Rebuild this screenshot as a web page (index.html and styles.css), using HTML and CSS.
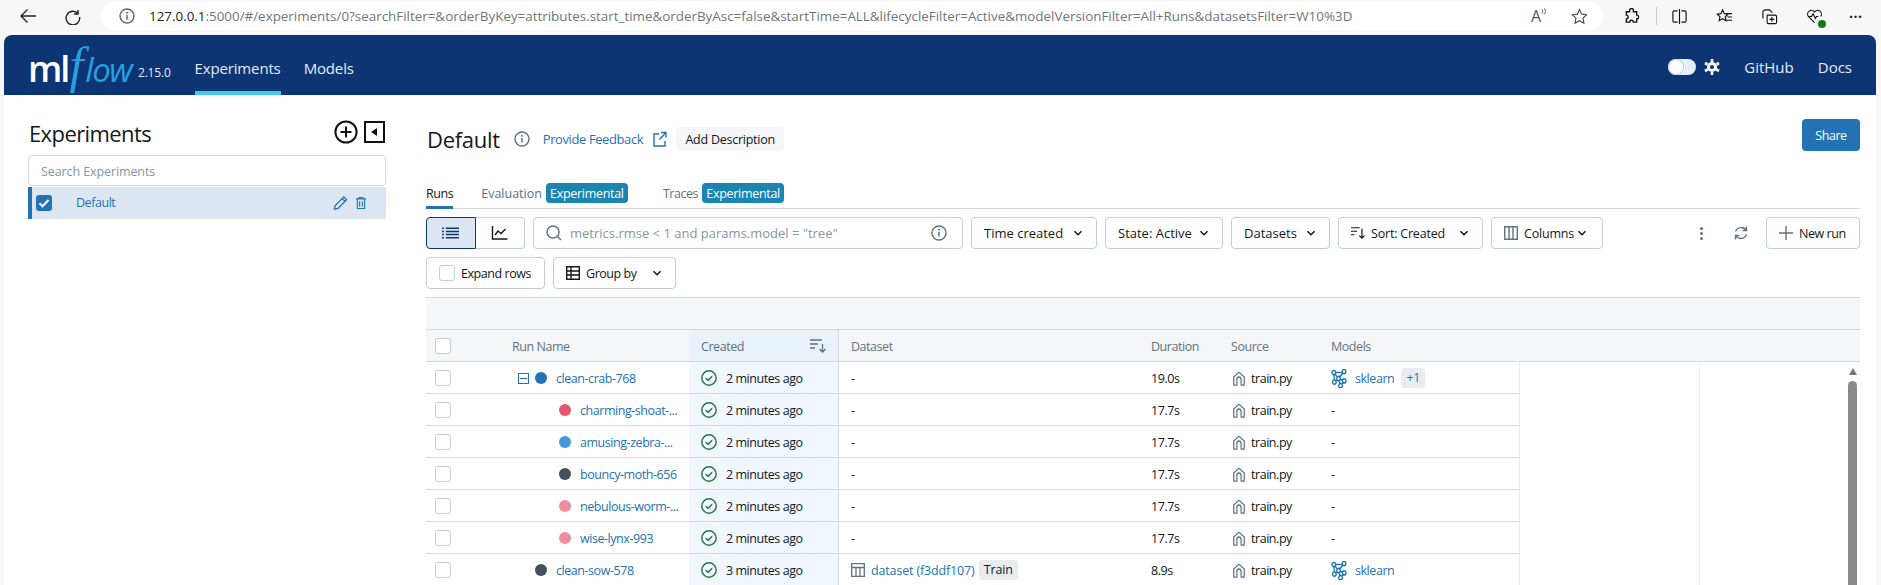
FILE: index.html
```html
<!DOCTYPE html>
<html lang="en">
<head>
    <meta charset="UTF-8">
    <title>MLflow Experiments</title>
    <link rel="stylesheet" href="styles.css">
</head>
<body>
    <svg class="defs" width="0" height="0">
        <symbol id="i-check" viewBox="0 0 16 16"><circle cx="8" cy="8" r="7.2" fill="none" stroke="#277c43" stroke-width="1.5"/><path d="M4.9 8.2l2.2 2.2 4-4.2" fill="none" stroke="#277c43" stroke-width="1.5"/></symbol>
        <symbol id="i-source" viewBox="0 0 16 16" preserveAspectRatio="none"><path d="M2 15V6.5L8 1.2l6 5.3V15h-3.6V8.8a2.4 2.4 0 0 0-4.8 0V15z" fill="none" stroke="#5f7281" stroke-width="1.4" stroke-linejoin="round"/></symbol>
        <symbol id="i-model" viewBox="0 0 16 16" preserveAspectRatio="none"><g fill="none" stroke="#2272b4" stroke-width="1.3"><circle cx="2.8" cy="3" r="1.8"/><circle cx="13" cy="2.2" r="1.8"/><circle cx="7.6" cy="8" r="1.8"/><circle cx="3.4" cy="11" r="1.8"/><circle cx="13.2" cy="10" r="1.8"/><circle cx="9.5" cy="14" r="1.8"/><path d="M4.4 3h6.8M4 4.4l2.4 2.4M11.8 3.6L8.8 6.6M5.8 9L4.9 10M9.4 8.5l2 1M8 9.8l1 2.4M12.2 11.5l-1.4 1.2M3 4.8L3.3 9.2"/></g></symbol>
        <symbol id="i-info" viewBox="0 0 16 16"><circle cx="8" cy="8" r="7" fill="none" stroke="currentColor" stroke-width="1.4"/><path d="M8 7v4.6" stroke="currentColor" stroke-width="1.5"/><circle cx="8" cy="4.8" r="1" fill="currentColor"/></symbol>
        <symbol id="i-chev" viewBox="0 0 12 12"><path d="M2.5 4.2L6 7.7l3.5-3.5" fill="none" stroke="#11171c" stroke-width="1.5"/></symbol>
    </svg>

    <div class="browser-bar">
        <svg class="nav-icon back" viewBox="0 0 18 18"><path d="M17 9H2M8.500 2.500L2 9l6.500 6.500" fill="none" stroke="#222" stroke-width="1.4"/></svg>
        <svg class="nav-icon reload" viewBox="0 0 18 18"><path d="M14 3v4h-4M14 6.600A6.800 6.800 0 1 0 15.600 10" fill="none" stroke="#222" stroke-width="1.4"/></svg>
        <div class="address">
            <svg class="addr-info"><use href="#i-info"/></svg>
            <span class="url"><b>127.0.0.1</b>:5000/#/experiments/0?searchFilter=&amp;orderByKey=attributes.start_time&amp;orderByAsc=false&amp;startTime=ALL&amp;lifecycleFilter=Active&amp;modelVersionFilter=All+Runs&amp;datasetsFilter=W10%3D</span>
            <span class="read-aloud">A</span>
            <svg class="waves" viewBox="0 0 6 8"><path d="M1 1.500a3 3 0 0 1 0 4M3.500.5a5 5 0 0 1 0 6" fill="none" stroke="#555" stroke-width=".9"/></svg>
            <svg class="addr-star" viewBox="0 0 18 18"><path d="M9 1.600l2.300 4.900 5.200.7-3.800 3.600 1 5.300L9 13.500l-4.700 2.600 1-5.300L1.500 7.200l5.200-.7z" fill="none" stroke="#444" stroke-width="1.2"/></svg>
        </div>
        <div class="browser-tools">
            <svg viewBox="0 0 18 18"><path d="M7 2.500a2 2 0 0 1 4 0V4h3.500v3.500a2 2 0 0 1 0 4V15H11a2 2 0 0 0-4 0H3.500v-3.500a2 2 0 0 0 0-4V4H7z" fill="none" stroke="#111" stroke-width="1.4"/></svg>
            <i class="tool-sep"></i>
            <svg viewBox="0 0 18 18"><path d="M9 1v16M7 3H3.500A1.500 1.500 0 0 0 2 4.500v9A1.500 1.500 0 0 0 3.500 15H7M11 3h3.500A1.500 1.500 0 0 1 16 4.500v9a1.500 1.500 0 0 1-1.500 1.500H11" fill="none" stroke="#111" stroke-width="1.2"/></svg>
            <svg viewBox="0 0 18 18"><path d="M7 2l1.800 4 4 .5-3 2.800.8 4.200L7 11.400l-3.600 2.100.8-4.200-3-2.800 4-.5zM11 6h6M12 9.500h5M11 13h6" fill="none" stroke="#111" stroke-width="1.2"/></svg>
            <svg viewBox="0 0 18 18"><path d="M2 11V4.500A2.500 2.500 0 0 1 4.500 2H9l3 3M7 7.500h8a1.500 1.500 0 0 1 1.500 1.500v6a1.500 1.500 0 0 1-1.500 1.500H8A1.500 1.500 0 0 1 6.500 15V8zM11.500 9.500v5M9 12h5" fill="none" stroke="#111" stroke-width="1.2"/></svg>
            <span class="health">
                <svg viewBox="0 0 18 18"><path d="M9 15.500L2.500 9A4 4 0 0 1 9 4.200 4 4 0 0 1 15.500 9M3.500 9H6l1.500-3 2.500 5 1-2h2" fill="none" stroke="#111" stroke-width="1.2"/></svg>
                <i class="health-ok"></i>
            </span>
            <span class="tool-dots">&middot;&middot;&middot;</span>
        </div>
    </div>

    <div class="app">
        <header class="topbar">
            <div class="logo"><span class="logo-ml">ml</span><span class="logo-f">f</span><span class="logo-low">low</span></div>
            <span class="version">2.15.0</span>
            <nav class="topnav">
                <a class="topnav-link active">Experiments</a>
                <a class="topnav-link">Models</a>
            </nav>
            <div class="top-right">
                <span class="toggle"><i class="toggle-knob"></i></span>
                <svg class="gear" viewBox="0 0 16 16"><circle cx="8" cy="8" r="3.600" fill="none" stroke="#fff" stroke-width="3"/><path d="M8 0v3M8 13v3M1 4l2.600 1.500M12.400 10.500L15 12M1 12l2.600-1.500M12.400 5.500L15 4" stroke="#fff" stroke-width="2.600"/></svg>
                <a class="top-link github">GitHub</a>
                <a class="top-link">Docs</a>
            </div>
        </header>

        <div class="content">
            <aside class="sidebar">
                <div class="side-head">
                    <h2>Experiments</h2>
                    <svg class="side-add" viewBox="0 0 24 24"><circle cx="12" cy="12" r="10.600" fill="none" stroke="#111" stroke-width="2"/><path d="M12 6.500v11M6.500 12h11" stroke="#111" stroke-width="2"/></svg>
                    <svg class="side-collapse" viewBox="0 0 21 22"><rect x="1" y="1" width="19" height="20" fill="none" stroke="#111" stroke-width="2"/><path d="M13 7v8l-6-4z" fill="#111"/></svg>
                </div>
                <div class="side-search">Search Experiments</div>
                <div class="side-row">
                    <span class="side-check"><svg viewBox="0 0 16 16"><path d="M3.500 8.300l3 3 6-6.300" fill="none" stroke="#fff" stroke-width="2"/></svg></span>
                    <span class="side-name">Default</span>
                    <svg class="side-edit" viewBox="0 0 16 16"><path d="M1.500 14.500l.8-3.800L11.500 1.500l3 3-9.200 9.200zM9.800 3.200l3 3" fill="none" stroke="#2272b4" stroke-width="1.4"/></svg>
                    <svg class="side-trash" viewBox="0 0 11 14"><path d="M0 2.500h11M3.500 2.500V1h4v1.500M1.500 3v10h8V3M4 5v6M7 5v6" fill="none" stroke="#2272b4" stroke-width="1.2"/></svg>
                </div>
            </aside>

            <main class="main">
                <div class="page-head">
                    <div class="head-title">
                        <h1>Default</h1>
                        <svg class="head-info"><use href="#i-info"/></svg>
                        <a class="feedback">Provide Feedback</a>
                        <svg class="ext-link" viewBox="0 0 14 16"><path d="M6 3H1v12h11v-5M8 1.500h5v5M13 1.500L6.500 8.500" fill="none" stroke="#2272b4" stroke-width="1.4"/></svg>
                        <button class="add-desc">Add Description</button>
                    </div>
                    <button class="share">Share</button>
                </div>

                <div class="tabs">
                    <a class="tab tab-active">Runs</a>
                    <a class="tab tab-eval">Evaluation</a><span class="badge">Experimental</span>
                    <a class="tab tab-traces">Traces</a><span class="badge">Experimental</span>
                </div>

                <div class="toolbar">
                    <div class="segmented">
                        <span class="seg seg-on"><svg viewBox="0 0 18 12"><path d="M0 1h2M4 1h14M0 4.300h2M4 4.300h14M0 7.700h2M4 7.700h14M0 11h2M4 11h14" stroke="#0e3a6b" stroke-width="1.6"/></svg></span>
                        <span class="seg"><svg viewBox="0 0 16 14"><path d="M1 0v13h15M3.500 9l3-4 3 2.500L14 3" fill="none" stroke="#11171c" stroke-width="1.4"/></svg></span>
                    </div>
                    <div class="query">
                        <svg class="query-glass" viewBox="0 0 16 16"><circle cx="7" cy="7" r="6" fill="none" stroke="#5f7281" stroke-width="1.5"/><path d="M11.500 11.500L15 15" stroke="#5f7281" stroke-width="1.5"/></svg>
                        <span class="query-text">metrics.rmse &lt; 1 and params.model = "tree"</span>
                        <svg class="query-info"><use href="#i-info"/></svg>
                    </div>
                    <button class="tool w-time">Time created<svg class="chev"><use href="#i-chev"/></svg></button>
                    <button class="tool w-state">State: Active<svg class="chev"><use href="#i-chev"/></svg></button>
                    <button class="tool w-data">Datasets<svg class="chev"><use href="#i-chev"/></svg></button>
                    <button class="tool w-sort"><svg class="tool-ico" viewBox="0 0 16 14"><path d="M0 1h10M0 5h7M0 9h4M12.500 2v11M9.500 10l3 3 3-3" fill="none" stroke="#11171c" stroke-width="1.4"/></svg>Sort: Created<svg class="chev"><use href="#i-chev"/></svg></button>
                    <button class="tool w-cols"><svg class="tool-ico" viewBox="0 0 14 14"><path d="M.7.7h12.600v12.600H.7zM5 .7v12.600M9 .7v12.600" fill="none" stroke="#5f7281" stroke-width="1.4"/></svg>Columns<svg class="chev near"><use href="#i-chev"/></svg></button>
                    <span class="kebab"><i></i><i></i><i></i></span>
                    <svg class="refresh" viewBox="0 0 16 16"><path d="M13.500 1.500v4h-4M2.500 14.500v-4h4M13.300 5.500A6 6 0 0 0 2.500 6.500M2.700 10.500a6 6 0 0 0 10.800-1" fill="none" stroke="#5f7281" stroke-width="1.4"/></svg>
                    <button class="tool w-new"><svg class="tool-ico" viewBox="0 0 14 14"><path d="M7 0v14M0 7h14" stroke="#5f7281" stroke-width="1.4"/></svg>New run</button>
                </div>

                <div class="toolbar second">
                    <button class="tool w-expand"><i class="box"></i>Expand rows</button>
                    <button class="tool w-group"><svg class="tool-ico" viewBox="0 0 14 14"><path d="M.7.7h12.600v12.600H.7zM.7 5h12.600M.7 9h12.600M5 .7v12.600" fill="none" stroke="#11171c" stroke-width="1.4"/></svg>Group by<svg class="chev"><use href="#i-chev"/></svg></button>
                </div>

                <div class="band"></div>

                <div class="table">
                    <div class="row head">
                        <div class="c c-name"><i class="box"></i><span class="name-title">Run Name</span></div>
                        <div class="c c-created">Created<svg class="sort-ico" viewBox="0 0 16 14"><path d="M0 1h12M0 5h8M0 9h5M12.500 5v8M9.500 10l3 3 3-3" fill="none" stroke="#5f7281" stroke-width="1.3"/></svg></div>
                        <div class="c">Dataset</div>
                        <div class="c">Duration</div>
                        <div class="c">Source</div>
                        <div class="c">Models</div>
                    </div>

                    <div class="row">
                        <div class="c c-name"><i class="box"></i><i class="expander"></i><i class="dot d-blue"></i><a class="run">clean-crab-768</a></div>
                        <div class="c c-created"><svg class="status"><use href="#i-check"/></svg>2 minutes ago</div>
                        <div class="c">-</div>
                        <div class="c">19.0s</div>
                        <div class="c"><svg class="src"><use href="#i-source"/></svg>train.py</div>
                        <div class="c"><svg class="mdl"><use href="#i-model"/></svg><a class="run">sklearn</a><span class="plus">+1</span></div>
                        <div class="c-blank"></div><div class="c-blank"></div>
                    </div>
                    <div class="row">
                        <div class="c c-name child"><i class="box"></i><i class="dot d-red"></i><a class="run">charming-shoat-...</a></div>
                        <div class="c c-created"><svg class="status"><use href="#i-check"/></svg>2 minutes ago</div>
                        <div class="c">-</div>
                        <div class="c">17.7s</div>
                        <div class="c"><svg class="src"><use href="#i-source"/></svg>train.py</div>
                        <div class="c">-</div>
                        <div class="c-blank"></div><div class="c-blank"></div>
                    </div>
                    <div class="row">
                        <div class="c c-name child"><i class="box"></i><i class="dot d-sky"></i><a class="run">amusing-zebra-...</a></div>
                        <div class="c c-created"><svg class="status"><use href="#i-check"/></svg>2 minutes ago</div>
                        <div class="c">-</div>
                        <div class="c">17.7s</div>
                        <div class="c"><svg class="src"><use href="#i-source"/></svg>train.py</div>
                        <div class="c">-</div>
                        <div class="c-blank"></div><div class="c-blank"></div>
                    </div>
                    <div class="row">
                        <div class="c c-name child"><i class="box"></i><i class="dot d-slate"></i><a class="run">bouncy-moth-656</a></div>
                        <div class="c c-created"><svg class="status"><use href="#i-check"/></svg>2 minutes ago</div>
                        <div class="c">-</div>
                        <div class="c">17.7s</div>
                        <div class="c"><svg class="src"><use href="#i-source"/></svg>train.py</div>
                        <div class="c">-</div>
                        <div class="c-blank"></div><div class="c-blank"></div>
                    </div>
                    <div class="row">
                        <div class="c c-name child"><i class="box"></i><i class="dot d-pink"></i><a class="run">nebulous-worm-...</a></div>
                        <div class="c c-created"><svg class="status"><use href="#i-check"/></svg>2 minutes ago</div>
                        <div class="c">-</div>
                        <div class="c">17.7s</div>
                        <div class="c"><svg class="src"><use href="#i-source"/></svg>train.py</div>
                        <div class="c">-</div>
                        <div class="c-blank"></div><div class="c-blank"></div>
                    </div>
                    <div class="row">
                        <div class="c c-name child"><i class="box"></i><i class="dot d-pink"></i><a class="run">wise-lynx-993</a></div>
                        <div class="c c-created"><svg class="status"><use href="#i-check"/></svg>2 minutes ago</div>
                        <div class="c">-</div>
                        <div class="c">17.7s</div>
                        <div class="c"><svg class="src"><use href="#i-source"/></svg>train.py</div>
                        <div class="c">-</div>
                        <div class="c-blank"></div><div class="c-blank"></div>
                    </div>
                    <div class="row">
                        <div class="c c-name top"><i class="box"></i><i class="dot d-slate"></i><a class="run">clean-sow-578</a></div>
                        <div class="c c-created"><svg class="status"><use href="#i-check"/></svg>3 minutes ago</div>
                        <div class="c"><svg class="ds" viewBox="0 0 14 14"><path d="M.7.7h12.600v12.600H.7zM.7 4.500h12.600M5 4.500v8.800M9 4.500v8.800" fill="none" stroke="#5f7281" stroke-width="1.3"/></svg><a class="run dataset">dataset (f3ddf107)</a><span class="tag">Train</span></div>
                        <div class="c">8.9s</div>
                        <div class="c"><svg class="src"><use href="#i-source"/></svg>train.py</div>
                        <div class="c"><svg class="mdl"><use href="#i-model"/></svg><a class="run">sklearn</a></div>
                        <div class="c-blank"></div><div class="c-blank"></div>
                    </div>

                    <div class="scrollbar"><i class="arrow-up"></i><i class="thumb"></i></div>
                </div>
            </main>
        </div>
    </div>
</body>
</html>
```
FILE: styles.css
```css
* { box-sizing: border-box; }
html, body { margin: 0; height: 585px; overflow: hidden; }
body {
    font-family: "Open Sans", "Noto Sans", sans-serif;
    font-size: 12.5px;
    letter-spacing: -.45px;
    color: #11171c;
    background: #f7f7f7;
}
.defs { position: absolute; }
h1, h2 { margin: 0; font-weight: 400; }
button { font: inherit; color: inherit; letter-spacing: inherit; white-space: nowrap; }

/* browser chrome */
.browser-bar { height: 35px; display: flex; align-items: flex-start; }
.nav-icon { width: 18px; height: 18px; margin-top: 7px; }
.back { margin-left: 19px; }
.reload { margin-left: 27px; }
.address {
    margin-left: 19px;
    margin-top: 1px;
    width: 1502px;
    height: 30px;
    background: #fff;
    border-radius: 15px;
    display: flex;
    align-items: center;
    padding-left: 18px;
    color: #70757a;
    font-size: 13.4px;
    letter-spacing: 0;
}
.addr-info { width: 16px; height: 16px; color: #666; flex: none; }
.url { margin-left: 14px; white-space: nowrap; }
.url b { font-weight: 400; color: #222; }
.read-aloud { margin-left: auto; font-size: 16px; color: #555; }
.waves { width: 6px; height: 8px; margin-bottom: 8px; }
.addr-star { width: 17px; height: 17px; margin-left: 24px; margin-right: 15px; }
.browser-tools { display: flex; align-items: center; height: 32px; margin-left: 20px; }
.browser-tools svg { width: 17px; height: 17px; }
.browser-tools > svg { margin-right: 28px; }
.tool-sep { width: 1px; height: 18px; background: #ccc; margin: 0 14px 0 -12px; }
.health { position: relative; width: 17px; height: 17px; }
.health-ok {
    position: absolute; right: -3px; bottom: -3px;
    width: 8px; height: 8px; border-radius: 50%; background: #107c10;
}
.tool-dots { margin-left: 26px; font-weight: 700; font-size: 14px; color: #222; letter-spacing: .5px; }

/* app */
.app {
    margin: 0 5px 0 4px;
    height: 550px;
    background: #fff;
    border-radius: 8px 8px 0 0;
    overflow: hidden;
}
.topbar {
    height: 60px;
    background: #0d3574;
    display: flex;
    align-items: center;
    color: #e4ecf7;
    padding-left: 24px;
    letter-spacing: 0;
}
.logo { width: 105px; height: 60px; display: flex; align-items: baseline; padding-top: 6px; line-height: 48px; white-space: nowrap; color: #25a0e0; }
.logo-ml { font-size: 36px; font-weight: 600; color: #fff; letter-spacing: -2px; }
.logo-f { font-family: "Liberation Serif", serif; font-style: italic; font-size: 50px; margin-left: 1px; margin-right: 2px; }
.logo-low { font-size: 33px; font-style: italic; letter-spacing: -1.5px; }
.version { margin-left: 5px; margin-top: 14px; font-size: 12px; letter-spacing: -.2px; }
.topnav { display: flex; height: 60px; margin-left: 24px; gap: 23px; }
.topnav-link { display: flex; align-items: center; font-size: 15px; height: 60px; padding-top: 6px; letter-spacing: -.15px; }
.topnav-link.active { border-bottom: 4px solid #43c9ed; padding-top: 10px; }
.top-right { margin-left: auto; display: flex; align-items: center; padding-right: 24px; padding-top: 4px; }
.toggle {
    width: 28px; height: 16px; border-radius: 8px; background: #e8eef5;
    display: block; padding: 1px;
}
.toggle-knob { display: block; width: 14px; height: 14px; border-radius: 50%; background: #fff; box-shadow: 0 0 0 1px #c5d2e0; }
.gear { width: 16px; height: 16px; margin-left: 8px; }
.top-link { font-size: 15px; }
.github { margin-left: 24px; margin-right: 24px; }

.content { display: flex; }

/* experiment list */
.sidebar { width: 358px; margin-left: 24px; padding-top: 25px; flex: none; }
.side-head { height: 24px; display: flex; align-items: center; margin-bottom: 11px; }
.side-head h2 { font-size: 22px; margin-left: 1px; margin-right: auto; margin-top: 2px; letter-spacing: -.6px; }
.side-add { width: 24px; height: 24px; }
.side-collapse { width: 21px; height: 22px; margin-left: 6px; margin-right: 1px; }
.side-search {
    height: 31px; border: 1px solid #d1d9e1; border-radius: 4px;
    padding-left: 12px; line-height: 31px; color: #8696a3; letter-spacing: -.1px;
}
.side-row {
    margin-top: 1px; height: 32px; background: #dbe6f2;
    border-left: 4px solid #2272b4;
    display: flex; align-items: center;
}
.side-check { width: 16px; height: 16px; margin-left: 4px; border-radius: 3px; background: #2272b4; display: block; }
.side-check svg { display: block; }
.side-name { margin-left: 24px; color: #2272b4; margin-top: -2px; }
.side-edit { width: 15px; height: 16px; margin-left: auto; }
.side-trash { width: 10px; height: 14px; margin-left: 8px; margin-right: 20px; }

/* main column */
.main { width: 1434px; margin-left: 40px; padding-top: 24px; flex: none; }
.page-head { height: 32px; display: flex; align-items: flex-end; }
.head-title { height: 24px; display: flex; align-items: center; }
.page-head h1 { font-size: 22px; margin-left: 1px; letter-spacing: -.3px; }
.head-info { width: 16px; height: 16px; margin-left: 14px; color: #5f7281; }
.feedback { margin-left: 13px; color: #2272b4; font-size: 13px; letter-spacing: -.4px; }
.ext-link { width: 14px; height: 16px; margin-left: 10px; }
.add-desc { margin-left: 9px; width: 108px; height: 24px; padding: 0; border: 0; border-radius: 4px; background: #f5f6f7; letter-spacing: -.25px; }
.share { margin-left: auto; width: 58px; height: 32px; border: 0; border-radius: 4px; background: #2272b4; color: #fff; }

.tabs { margin-top: 32px; height: 26px; border-bottom: 1px solid #d1d9e1; display: flex; align-items: flex-start; }
.tab { height: 26px; line-height: 21px; color: #5f7281; }
.tab-active { color: #11171c; border-bottom: 3px solid #2272b4; }
.tab-eval { margin-left: 28px; letter-spacing: 0; }
.tab-traces { margin-left: 35px; }
.badge {
    margin-left: 4px; width: 82px; height: 20px; text-align: center; border-radius: 4px;
    background: #1a84b2; color: #fff; line-height: 21px; letter-spacing: -.3px;
}

.toolbar { margin-top: 8px; height: 32px; display: flex; align-items: center; gap: 8px; }
.segmented { display: flex; width: 99px; height: 32px; flex: none; }
.seg {
    width: 50px; height: 32px; border: 1px solid #c0cdd8; border-left: 0;
    border-radius: 0 4px 4px 0; display: flex; align-items: center; justify-content: center;
}
.seg-on { background: #dbe6f2; border: 1px solid #0e3a6b; border-radius: 4px 0 0 4px; }
.seg svg { width: 17px; height: 14px; }
.query {
    width: 430px; height: 32px; border: 1px solid #c0cdd8; border-radius: 4px;
    display: flex; align-items: center; padding: 0 12px; flex: none;
}
.query-glass { width: 16px; height: 16px; }
.query-text { margin-left: 8px; color: #8696a3; font-size: 13px; letter-spacing: 0; }
.query-info { width: 16px; height: 16px; margin-left: auto; margin-right: 3px; color: #5f7281; }
.tool {
    height: 32px; border: 1px solid #c0cdd8; border-radius: 4px; background: #fff;
    display: flex; align-items: center; padding: 0 12px; flex: none;
}
.chev { width: 12px; height: 12px; margin-left: auto; flex: none; }
.chev.near { margin-left: 2px; }
.tool-ico { width: 14px; height: 14px; margin-right: 6px; flex: none; }
.w-time { width: 126px; font-size: 13px; letter-spacing: 0; }
.w-state { width: 118px; font-size: 13px; letter-spacing: 0; }
.w-data { width: 99px; font-size: 13px; letter-spacing: 0; }
.w-sort { width: 145px; letter-spacing: -.2px; }
.w-cols { width: 112px; letter-spacing: -.2px; }
.w-new { width: 94px; margin-left: 9px; }
.kebab { margin-left: 82px; width: 16px; display: flex; flex-direction: column; align-items: center; gap: 2px; }
.kebab i { width: 3px; height: 3px; border-radius: 50%; background: #5f7281; }
.refresh { width: 16px; height: 16px; margin-left: 16px; }
.w-expand { width: 119px; }
.w-group { width: 123px; }
.box {
    display: block; width: 16px; height: 16px; flex: none; border: 1px solid #c0cdd8;
    border-radius: 3px; background: #fff;
}
.w-expand .box { margin-right: 6px; }

.band { margin-top: 8px; height: 33px; background: #f5f6f7; border-top: 1px solid #d1d9e1; border-bottom: 1px solid #d1d9e1; }

/* runs table */
.table { position: relative; }
.row {
    display: grid;
    grid-template-columns: 263px 150px 300px 80px 100px 200px 180px 1fr;
    height: 32px;
}
.c {
    display: flex; align-items: center; padding-left: 12px; padding-top: 1px;
    border-bottom: 1px solid #d1d9e1; white-space: nowrap; min-width: 0;
}
.c-blank { border-left: 1px solid #e8ecf0; }
.c-blank + .c-blank { border-left: 1px solid #eef1f4; }
.row.head { background: #f5f6f7; color: #5f7281; border-bottom: 1px solid #d1d9e1; }
.row.head .c { border-bottom: 0; }
.row.head .c-created { background: #e9f1fa; }
.c-name { padding-left: 9px; }
.c-created { background: #f0f7fe; border-right: 1px solid #d1d9e1; }
.name-title { margin-left: 61px; }
.sort-ico { width: 16px; height: 14px; margin-left: auto; margin-right: 12px; }
.expander {
    width: 11px; height: 11px; margin-left: 67px; border: 1px solid #2272b4; flex: none;
    background: linear-gradient(#2272b4, #2272b4) center / 7px 1px no-repeat;
}
.dot { width: 12px; height: 12px; border-radius: 50%; flex: none; margin-left: 6px; margin-right: 9px; }
.child .dot { margin-left: 108px; }
.top .dot { margin-left: 84px; }
.d-blue { background: #2272b4; }
.d-red { background: #e5566f; }
.d-sky { background: #4299e0; }
.d-slate { background: #434f5c; }
.d-pink { background: #f08c9f; }
.run { color: #2272b4; }
.dataset { letter-spacing: -.15px; }
.status { width: 16px; height: 16px; margin-right: 9px; flex: none; }
.src { width: 14px; height: 15px; margin-left: 1px; margin-right: 5px; flex: none; }
.mdl { width: 16px; height: 19px; margin-right: 8px; flex: none; }
.ds { width: 14px; height: 14px; margin-right: 6px; flex: none; }
.plus { margin-left: 7px; width: 24px; text-align: center; height: 20px; line-height: 20px; border-radius: 4px; background: #e8ecf0; color: #2272b4; }
.tag { margin-left: 4px; padding: 0 5px; height: 20px; line-height: 20px; border-radius: 4px; background: #e8ecf0; letter-spacing: -.1px; }

.scrollbar { position: absolute; right: 3px; top: 32px; width: 9px; height: 300px; }
.arrow-up { display: block; margin: 6px auto 0; width: 0; height: 0; border: 4.5px solid transparent; border-top: 0; border-bottom: 7px solid #777; }
.thumb { display: block; margin-top: 6px; height: 300px; background: #8a8a8a; border-radius: 5px 5px 0 0; }
```
